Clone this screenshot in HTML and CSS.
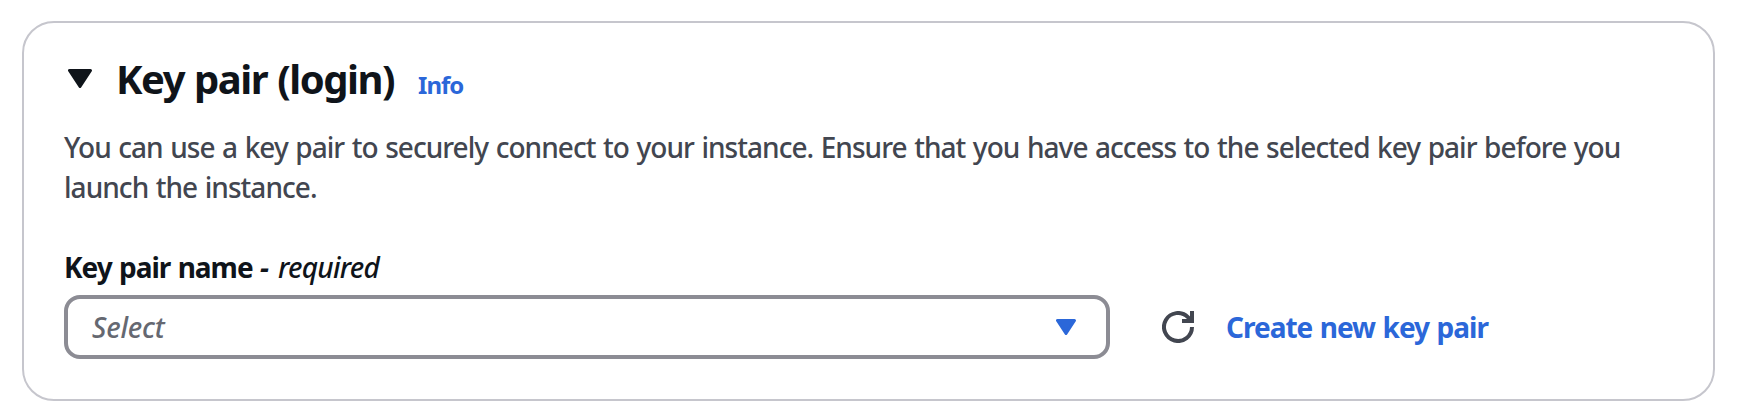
FILE: index.html
```html
<!DOCTYPE html>
<html lang="en">
<head>
<meta charset="utf-8">
<title>Key pair (login)</title>
<link rel="stylesheet" href="styles.css">
</head>
<body>
<section class="card">
  <header class="heading">
    <svg class="caret" viewBox="0 0 24 19"><path d="M1.5 1.5H22.5L12 17.5Z"/></svg>
    <h2 class="title">Key pair (login)</h2>
    <a class="info">Info</a>
  </header>
  <p class="description">You can use a key pair to securely connect to your instance. Ensure that you have access to the selected key pair before you<br>launch the instance.</p>
  <div class="label"><b class="label-name">Key pair name</b> <i class="required"><span class="dash">-</span> required</i></div>
  <div class="controls">
    <div class="select"><i class="placeholder">Select</i><svg class="arrow" viewBox="0 0 20 16"><path d="M1.5 1.5H18.5L10 14.5Z"/></svg></div>
    <svg class="refresh" viewBox="0 0 32 32"><path d="M30 16A14 14 0 1 1 25.9 6.1L29 9.5M30 0V10H20"/></svg>
    <a class="create">Create new key pair</a>
  </div>
</section>
</body>
</html>
```
FILE: styles.css
```css
* { box-sizing: border-box; }
body { margin: 0; padding: 21px 27px 17px 22px; background: #fff; font-family: "Noto Sans", sans-serif; color: #0f141a; }
.card { height: 380px; border: 2px solid #c6c6cd; border-radius: 32px; padding: 31px 40px; }
.heading { display: flex; align-items: baseline; height: 50px; }
.caret { align-self: flex-start; width: 24px; height: 19px; margin: 15px 24px 0 4px; fill: #0f141a; stroke: #0f141a; stroke-width: 3; stroke-linejoin: round; }
.title { margin: 0; font-size: 40px; line-height: 50px; letter-spacing: -1.5px; word-spacing: 1.2px; }
.info { color: #2b67d9; font-size: 24px; font-weight: 700; letter-spacing: -1px; margin-left: 24px; }
.description { margin: 23px 0 0; color: #424650; font-size: 28px; font-weight: 500; letter-spacing: -0.96px; word-spacing: 1.2px; line-height: 40px; white-space: nowrap; }
.label { margin-top: 40px; font-size: 28px; line-height: 40px; white-space: nowrap; }
.label-name { letter-spacing: -1px; word-spacing: 1px; }
.required { letter-spacing: -0.75px; font-weight: 500; }
.dash { font-weight: 700; letter-spacing: 2.5px; }
.controls { display: flex; align-items: center; height: 64px; margin-top: 8px; line-height: 36px; }
.select { width: 1046px; height: 64px; border: 4px solid #8c8c94; border-radius: 16px; display: flex; align-items: center; justify-content: space-between; padding: 0 30px 0 24px; }
.placeholder { font-size: 28px; color: #656871; letter-spacing: -0.2px; font-weight: 500; }
.arrow { width: 20px; height: 16px; fill: #2b67d9; stroke: #2b67d9; stroke-width: 3; stroke-linejoin: round; }
.refresh { width: 32px; height: 32px; margin: 0 32px 0 52px; fill: none; stroke: #424650; stroke-width: 4; }
.create { color: #2b67d9; font-size: 28px; font-weight: 700; letter-spacing: -1px; word-spacing: 1.2px; }
```
